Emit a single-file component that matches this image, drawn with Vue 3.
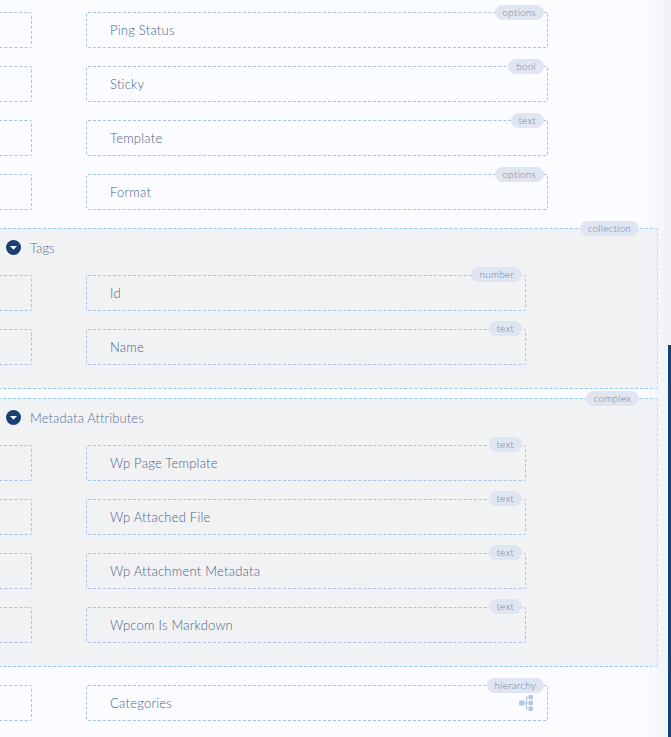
<script setup>
const top = [
  { label: 'Ping Status', tag: 'options' },
  { label: 'Sticky', tag: 'bool' },
  { label: 'Template', tag: 'text' },
  { label: 'Format', tag: 'options' },
]
const groups = [
  { title: 'Tags', tag: 'collection', items: [
    { label: 'Id', tag: 'number' },
    { label: 'Name', tag: 'text' },
  ] },
  { title: 'Metadata Attributes', tag: 'complex', items: [
    { label: 'Wp Page Template', tag: 'text' },
    { label: 'Wp Attached File', tag: 'text' },
    { label: 'Wp Attachment Metadata', tag: 'text' },
    { label: 'Wpcom Is Markdown', tag: 'text' },
  ] },
]
</script>

<template>
  <div class="page">
    <div class="list">
      <div v-for="row in top" :key="row.label" class="row">
        <div class="stub"></div>
        <div class="field">
          <span class="label">{{ row.label }}</span>
          <span class="tag">{{ row.tag }}</span>
        </div>
      </div>
    </div>
    <section v-for="g in groups" :key="g.title" class="group">
      <span class="tag group-tag">{{ g.tag }}</span>
      <div class="group-head">
        <svg class="toggle" width="15" height="15" viewBox="0 0 15 15">
          <circle cx="7.5" cy="7.5" r="7.5" fill="#193f72" />
          <path d="M4 6h7L7.5 9.8z" fill="#fff" />
        </svg>
        <span class="group-title">{{ g.title }}</span>
      </div>
      <div class="group-list">
        <div v-for="row in g.items" :key="row.label" class="row">
          <div class="stub"></div>
          <div class="field inner">
            <span class="label">{{ row.label }}</span>
            <span class="tag">{{ row.tag }}</span>
          </div>
        </div>
      </div>
    </section>
    <div class="row last">
      <div class="stub"></div>
      <div class="field">
        <span class="label">Categories</span>
        <span class="tag">hierarchy</span>
        <svg class="tree" width="14" height="16" viewBox="0 0 14 16">
          <g fill="#b4c6e6">
            <rect x="0" y="5.5" width="5.5" height="5" rx="1" />
            <rect x="9.5" y="0" width="4.5" height="4.5" rx="1" />
            <rect x="9.5" y="5.75" width="4.5" height="4.5" rx="1" />
            <rect x="9.5" y="11.5" width="4.5" height="4.5" rx="1" />
          </g>
          <path d="M5 8h4.5M7.5 2.2v11.6M7.5 2.2h2M7.5 13.8h2" stroke="#b4c6e6" stroke-width="1.2" fill="none" />
        </svg>
      </div>
    </div>
    <div class="edge"></div>
    <div class="thumb"></div>
  </div>
</template>

<style>
html, body { margin: 0; padding: 0; }
</style>

<style scoped>
.page {
  position: relative;
  width: 671px;
  height: 737px;
  overflow: hidden;
  background: #fbfcff;
  font-family: "Lato", "Open Sans", sans-serif;
  font-weight: 300;
  color: #50678c;
  padding-top: 12px;
  box-sizing: border-box;
}
.list { display: flex; flex-direction: column; gap: 18px; }
.row { display: flex; gap: 54px; }
.stub {
  width: 40px;
  height: 36px;
  margin-left: -8px;
  box-sizing: border-box;
  border: 1px dashed #a9c3e8;
  border-radius: 2px;
  flex: none;
}
.field {
  position: relative;
  width: 462px;
  height: 36px;
  box-sizing: border-box;
  border: 1px dashed #a9c3e8;
  border-radius: 2px;
  display: flex;
  align-items: center;
  padding-left: 23px;
}
.field.inner { width: 440px; }
.field.inner .tag { top: -9px; }
.label { font-size: 13px; letter-spacing: 0.23px; color: #4c6389; }
.tag {
  position: absolute;
  top: -8px;
  right: 3px;
  height: 15px;
  line-height: 14px;
  padding: 0 8px;
  border-radius: 8px;
  background: #dfe6f2;
  color: #6c7f9d;
  font-size: 10px;
  letter-spacing: 0.2px;
}
.group {
  position: relative;
  width: 690px;
  margin-left: -32px;
  box-sizing: border-box;
  background: #f1f2f4;
  border: 1px dashed #92c9f5;
  padding: 0 0 23px 31px;
}
.group:first-of-type { margin-top: 18px; }
.group + .group { margin-top: 9px; }
.group-tag { right: 18px; top: -8px; }
.group-head {
  display: flex;
  align-items: center;
  gap: 9px;
  height: 37px;
  padding-left: 6px;
  margin-bottom: 9px;
}
.group-title { font-size: 13px; letter-spacing: 0.1px; color: #5a6f92; }
.group-list { display: flex; flex-direction: column; gap: 18px; }
.last { margin-top: 18px; }
.tree { position: absolute; right: 14px; top: 9px; }
.edge {
  position: absolute;
  top: 0;
  right: 0;
  width: 30px;
  height: 100%;
  background: linear-gradient(to right, rgba(240, 241, 244, 0), rgba(240, 241, 244, 0.9));
  pointer-events: none;
}
.thumb {
  position: absolute;
  right: 0;
  top: 345px;
  bottom: 0;
  width: 3px;
  background: #193f72;
}
</style>
